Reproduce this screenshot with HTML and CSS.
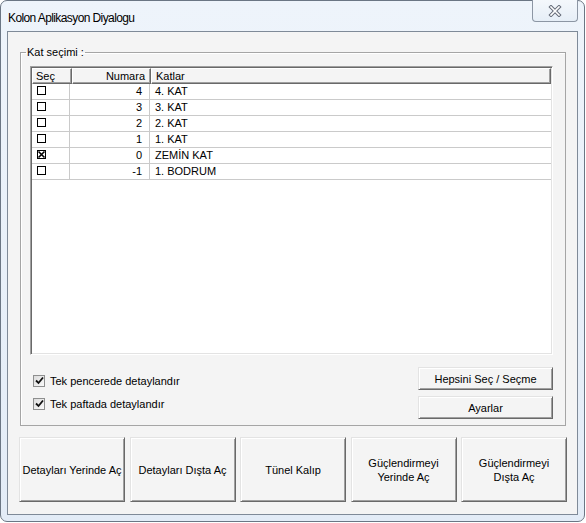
FILE: index.html
```html
<!DOCTYPE html>
<html>

<head>
    <title>Kolon Aplikasyon Diyalogu</title>
    <link rel="stylesheet" href="styles.css">
</head>

<body>
    <div class="window">
        <div class="titlebar">
            <span class="title">Kolon Aplikasyon Diyalogu</span>
            <div class="close">
                <svg width="14" height="12" viewBox="0 0 14 12">
                    <path d="M3 2 L11 10 M11 2 L3 10" stroke="#646b78" stroke-width="3.6" stroke-linecap="square" fill="none" />
                    <path d="M3 2 L11 10 M11 2 L3 10" stroke="#fff" stroke-width="1.6" stroke-linecap="square" fill="none" />
                </svg>
            </div>
        </div>
        <div class="client">
            <fieldset class="group">
                <legend>Kat seçimi :</legend>
                <div class="listview">
                    <div class="lv-header">
                        <div class="hcol hcol-sec">Seç</div>
                        <div class="hcol hcol-num">Numara</div>
                        <div class="hcol hcol-kat">Katlar</div>
                    </div>
                    <div class="lv-row">
                        <div class="cell cell-sec"><span class="tick"></span></div>
                        <div class="cell cell-num">4</div>
                        <div class="cell cell-kat">4. KAT</div>
                    </div>
                    <div class="lv-row">
                        <div class="cell cell-sec"><span class="tick"></span></div>
                        <div class="cell cell-num">3</div>
                        <div class="cell cell-kat">3. KAT</div>
                    </div>
                    <div class="lv-row">
                        <div class="cell cell-sec"><span class="tick"></span></div>
                        <div class="cell cell-num">2</div>
                        <div class="cell cell-kat">2. KAT</div>
                    </div>
                    <div class="lv-row">
                        <div class="cell cell-sec"><span class="tick"></span></div>
                        <div class="cell cell-num">1</div>
                        <div class="cell cell-kat">1. KAT</div>
                    </div>
                    <div class="lv-row">
                        <div class="cell cell-sec">
                            <span class="tick on">
                                <svg width="9" height="9" viewBox="0 0 9 9">
                                    <path d="M1.5 1.5 L7.5 7.5 M7.5 1.5 L1.5 7.5" stroke="#000" stroke-width="1.6" fill="none" />
                                </svg>
                            </span>
                        </div>
                        <div class="cell cell-num">0</div>
                        <div class="cell cell-kat">ZEMİN KAT</div>
                    </div>
                    <div class="lv-row">
                        <div class="cell cell-sec"><span class="tick"></span></div>
                        <div class="cell cell-num">-1</div>
                        <div class="cell cell-kat">1. BODRUM</div>
                    </div>
                </div>
                <div class="options">
                    <div class="checks">
                        <label class="check">
                            <span class="box">
                                <svg width="9" height="9" viewBox="0 0 9 9">
                                    <path d="M1 4.5 L3.5 7 L8 1.5" stroke="#111" stroke-width="1.8" fill="none" />
                                </svg>
                            </span>
                            Tek pencerede detaylandır
                        </label>
                        <label class="check">
                            <span class="box">
                                <svg width="9" height="9" viewBox="0 0 9 9">
                                    <path d="M1 4.5 L3.5 7 L8 1.5" stroke="#111" stroke-width="1.8" fill="none" />
                                </svg>
                            </span>
                            Tek paftada detaylandır
                        </label>
                    </div>
                    <div class="side-buttons">
                        <button class="btn btn-side">Hepsini Seç / Seçme</button>
                        <button class="btn btn-side">Ayarlar</button>
                    </div>
                </div>
            </fieldset>
            <div class="actions">
                <button class="btn btn-big">Detayları Yerinde Aç</button>
                <button class="btn btn-big">Detayları Dışta Aç</button>
                <button class="btn btn-big">Tünel Kalıp</button>
                <button class="btn btn-big">Güçlendirmeyi<br>Yerinde Aç</button>
                <button class="btn btn-big">Güçlendirmeyi<br>Dışta Aç</button>
            </div>
        </div>
    </div>
</body>

</html>
```

FILE: styles.css
```css
body {
    margin: 0;
    background-color: #fff;
    font-family: "Liberation Sans", Arial, sans-serif;
    font-size: 11px;
    color: #000;
}

.window {
    box-sizing: border-box;
    width: 585px;
    height: 522px;
    border: 1px solid #6b7684;
    border-radius: 7px;
    background: linear-gradient(#eef4fb, #e3ecf7);
    padding: 0 6px 6px 6px;
    display: flex;
    flex-direction: column;
}

.titlebar {
    height: 30px;
    display: flex;
    align-items: flex-start;
}

.title {
    font-size: 12px;
    letter-spacing: -0.6px;
    padding: 10px 0 0 1px;
    color: #000;
}

.close {
    margin-left: auto;
    margin-top: -1px;
    box-sizing: border-box;
    width: 46px;
    height: 22px;
    border: 1px solid #8c96a4;
    border-top: none;
    border-radius: 0 0 4px 4px;
    background: linear-gradient(#f4f8fc, #e6eef7);
    display: flex;
    align-items: center;
    justify-content: center;
}

.client {
    flex: 1;
    border: 1px solid #7f8a98;
    background-color: #f4f4f4;
    padding: 14px 10px 0 11px;
}

.group {
    margin: 0 1px;
    padding: 0 12px 6px 9px;
    border: 1px solid #a5a5a5;
    box-shadow: inset 1px 1px 0 #fff;
}

.group legend {
    margin-left: -4px;
    padding: 0 1px;
    line-height: 13px;
}

.listview {
    box-sizing: border-box;
    margin-top: 7px;
    height: 289px;
    background-color: #fff;
    border: 1px solid;
    border-color: #a0a0a0 #fff #fff #a0a0a0;
    box-shadow: inset 1px 1px 0 #696969, inset -1px -1px 0 #e3e3e3;
    padding: 1px;
}

.lv-header {
    display: flex;
    height: 16px;
}

.hcol {
    box-sizing: border-box;
    height: 16px;
    line-height: 14px;
    background-color: #f4f4f4;
    border: 1px solid;
    border-color: #fff #696969 #696969 #fff;
    box-shadow: inset -1px -1px 0 #a0a0a0;
    padding: 0 4px;
}

.hcol-sec {
    width: 40px;
    padding-left: 3px;
}

.hcol-num {
    width: 79px;
    text-align: right;
    padding-right: 5px;
}

.hcol-kat {
    flex: 1;
}

.lv-row {
    display: flex;
    height: 16px;
    border-bottom: 1px solid #cacaca;
    box-sizing: border-box;
}

.cell {
    box-sizing: border-box;
    line-height: 15px;
    border-right: 1px solid #cacaca;
}

.cell-sec {
    width: 38px;
    padding: 2px 0 0 5px;
}

.cell-num {
    width: 80px;
    text-align: right;
    padding-right: 7px;
}

.cell-kat {
    flex: 1;
    border-right: none;
    padding-left: 5px;
}

.tick {
    display: block;
    box-sizing: border-box;
    width: 9px;
    height: 9px;
    border: 1px solid #000;
    background-color: #fff;
    position: relative;
}

.tick svg {
    position: absolute;
    left: -1px;
    top: -1px;
}

.options {
    display: flex;
    justify-content: space-between;
    margin-top: 12px;
}

.checks {
    display: flex;
    flex-direction: column;
    gap: 10px;
    padding: 7px 0 0 3px;
}

.check {
    display: flex;
    align-items: center;
    gap: 5px;
    height: 13px;
}

.box {
    box-sizing: border-box;
    width: 12px;
    height: 12px;
    border: 1px solid #8e8f8f;
    background: linear-gradient(135deg, #dcdcdc, #fafafa);
    display: flex;
    align-items: center;
    justify-content: center;
}

.side-buttons {
    display: flex;
    flex-direction: column;
    gap: 6px;
}

.btn {
    box-sizing: border-box;
    font-family: "Liberation Sans", Arial, sans-serif;
    font-size: 11px;
    color: #000;
    background-color: #f4f4f4;
    border: 1px solid;
    border-color: #e3e3e3 #696969 #696969 #e3e3e3;
    box-shadow: inset 1px 1px 0 #fff, inset -1px -1px 0 #a0a0a0;
    padding: 0;
    line-height: 14px;
}

.btn-side {
    width: 135px;
    height: 23px;
}

.actions {
    display: flex;
    justify-content: space-between;
    margin-top: 11px;
}

.btn-big {
    width: 106px;
    height: 65px;
}
```
